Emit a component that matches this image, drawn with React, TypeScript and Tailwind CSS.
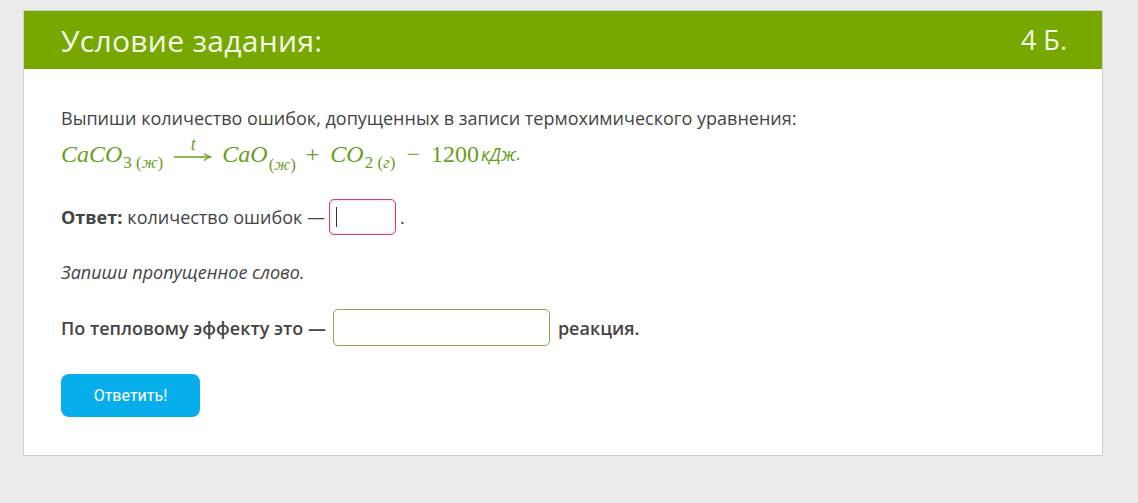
import React from "react";

const serif = { fontFamily: '"Liberation Serif", "DejaVu Serif", serif' };

function Sub({ children, drop = 8 }: { children: React.ReactNode; drop?: number }) {
  return (
    <span className="ml-[1px] text-[17px] not-italic" style={{ position: "relative", top: drop }}>
      {children}
    </span>
  );
}

export default function App() {
  return (
    <div className="min-h-[503px] bg-[#ebebeb] pt-[10px] pl-[23px]" style={{ fontFamily: '"Open Sans", "Noto Sans", sans-serif' }}>
      <div className="w-[1080px] border border-[#cfcfcf] bg-white">
        <div className="flex h-[58px] items-center justify-between bg-[#76a800] pl-[37px] pr-[35px] text-[30px] text-[#f4fbe6]">
          <span className="tracking-[0.3px]">Условие задания:</span>
          <span className="text-[27px]">4 Б.</span>
        </div>
        <div className="pl-[37px] pt-[37px] pb-[38px] text-[18px] leading-[24px] text-[#444444]">
          <div>Выпиши количество ошибок, допущенных в записи термохимического уравнения:</div>
          <div className="flex h-[45px] items-end pb-[9px] text-[24px] leading-[23px] text-[#6a9e1f]" style={serif}>
            <span className="italic">CaCO</span>
            <Sub>3&nbsp;(<i>ж</i>)</Sub>
            <span className="ml-[10px] inline-flex flex-col items-center" style={{ position: "relative", top: -4 }}>
              <span className="text-[18px] italic leading-[16px]">t</span>
              <svg width="40" height="10" viewBox="0 0 40 10">
                <path d="M1 5 H37" stroke="#6a9e1f" strokeWidth="1.3" fill="none" />
                <path d="M31 1.5 Q34 4.2 38.5 5 Q34 5.8 31 8.5" stroke="#6a9e1f" strokeWidth="1.2" fill="none" />
              </svg>
            </span>
            <span className="ml-[9px] italic">CaO</span>
            <Sub drop={10}>(<i>ж</i>)</Sub>
            <span className="ml-[10px]">+</span>
            <span className="ml-[11px] italic">CO</span>
            <Sub>2&nbsp;(<i>г</i>)</Sub>
            <span className="ml-[11px]">−</span>
            <span className="ml-[11px]">1200</span>
            <span className="ml-[2px] text-[18px] italic" style={{ fontFamily: '"Open Sans", sans-serif' }}>кДж</span>
            <span className="text-[18px]">.</span>
          </div>
          <div className="mt-[24px] flex h-[36px] items-center">
            <span className="font-bold">Ответ:</span>
            <span className="ml-[5px]">количество ошибок —</span>
            <div className="ml-[4px] flex h-[36px] w-[67px] items-center rounded-[5px] border border-[#c2408e] pl-[6px] shadow-[inset_0_0_3px_rgba(194,64,142,0.35)]">
              <div className="h-[20px] w-[1px] bg-[#333]" />
            </div>
            <span className="ml-[4px]">.</span>
          </div>
          <div className="mt-[25px] italic">Запиши пропущенное слово.</div>
          <div className="mt-[25px] flex h-[37px] items-center font-semibold">
            <span>По тепловому эффекту это —</span>
            <div className="ml-[7px] h-[37px] w-[217px] rounded-[5px] border border-[#8caa4c]" />
            <span className="ml-[8px]">реакция.</span>
          </div>
          <button
            className="mt-[28px] flex h-[43px] w-[139px] items-center justify-center rounded-[8px] bg-[#08adec] text-[16px] text-white"
            style={{ fontFamily: 'Roboto, "Liberation Sans", sans-serif' }}
          >
            Ответить!
          </button>
        </div>
      </div>
    </div>
  );
}
